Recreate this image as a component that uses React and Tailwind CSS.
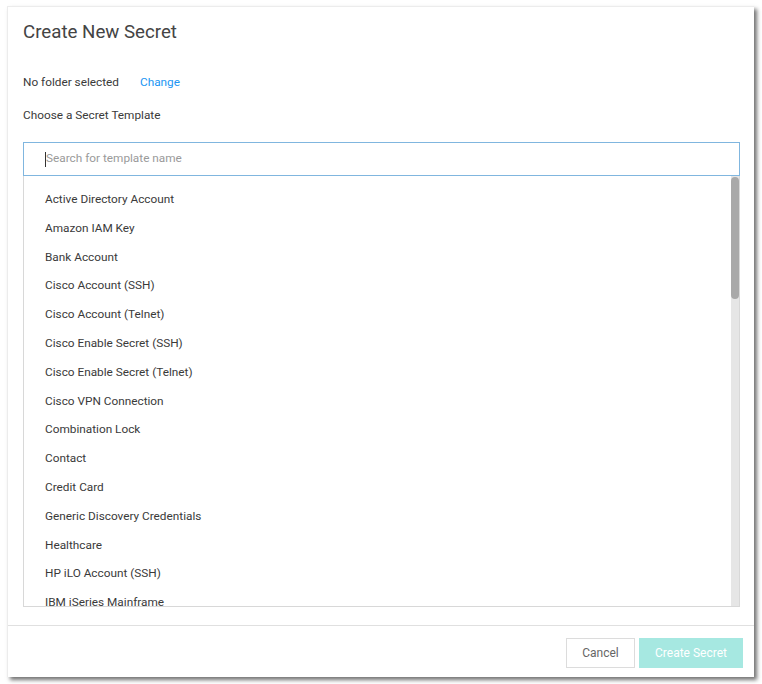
import React from "react";

const items = [
  "Active Directory Account",
  "Amazon IAM Key",
  "Bank Account",
  "Cisco Account (SSH)",
  "Cisco Account (Telnet)",
  "Cisco Enable Secret (SSH)",
  "Cisco Enable Secret (Telnet)",
  "Cisco VPN Connection",
  "Combination Lock",
  "Contact",
  "Credit Card",
  "Generic Discovery Credentials",
  "Healthcare",
  "HP iLO Account (SSH)",
  "IBM iSeries Mainframe",
];

export default function App() {
  return (
    <div className="w-[762px] h-[684px] bg-white pt-[6px] pl-[7px] font-['Roboto',sans-serif]">
      <div className="w-[747px] h-[671px] bg-white border-t border-l border-[#ececec] shadow-[3px_3px_4px_rgba(0,0,0,0.55)] flex flex-col">
        <div className="pl-[15px] pt-[13px]">
          <h1 className="text-[18.7px] leading-[24px] text-[#444] font-normal">Create New Secret</h1>
          <div className="mt-[30px] flex items-center text-[11.8px] leading-[16px] text-[#3a3a3a]">
            <span>No folder selected</span>
            <span className="ml-[21px] text-[#2196f3]">Change</span>
          </div>
          <div className="mt-[17px] text-[11.8px] leading-[16px] text-[#3a3a3a]">Choose a Secret Template</div>
          <div className="mt-[19px] w-[717px] h-[34px] border border-[#80b6df] flex items-center pl-[21px]">
            <span className="w-px h-[15px] bg-[#333]" />
            <span className="text-[11.8px] text-[#9a9a9a]">Search for template name</span>
          </div>
          <div className="w-[717px] h-[431px] border-l border-r border-b border-[#d8d8d8] flex overflow-hidden">
            <div className="flex-1 pt-[9px] pl-[21px] overflow-hidden">
              {items.map((t) => (
                <div key={t} className="h-[28.8px] leading-[28.8px] text-[11.8px] text-[#3a3a3a]">{t}</div>
              ))}
            </div>
            <div className="w-[8px] bg-[#e6e6e6] pt-[1px]">
              <div className="h-[122px] rounded-full bg-[#a9a9a9]" />
            </div>
          </div>
        </div>
        <div className="mt-[18px] border-t border-[#e0e0e0] flex justify-end gap-[4px] pt-[12px] pr-[11px]">
          <button className="w-[69px] h-[30px] border border-[#dcdcdc] bg-white text-[12px] text-[#666]">Cancel</button>
          <button className="w-[104px] h-[30px] bg-[#a6e8e1] text-[12px] text-white">Create Secret</button>
        </div>
      </div>
    </div>
  );
}
